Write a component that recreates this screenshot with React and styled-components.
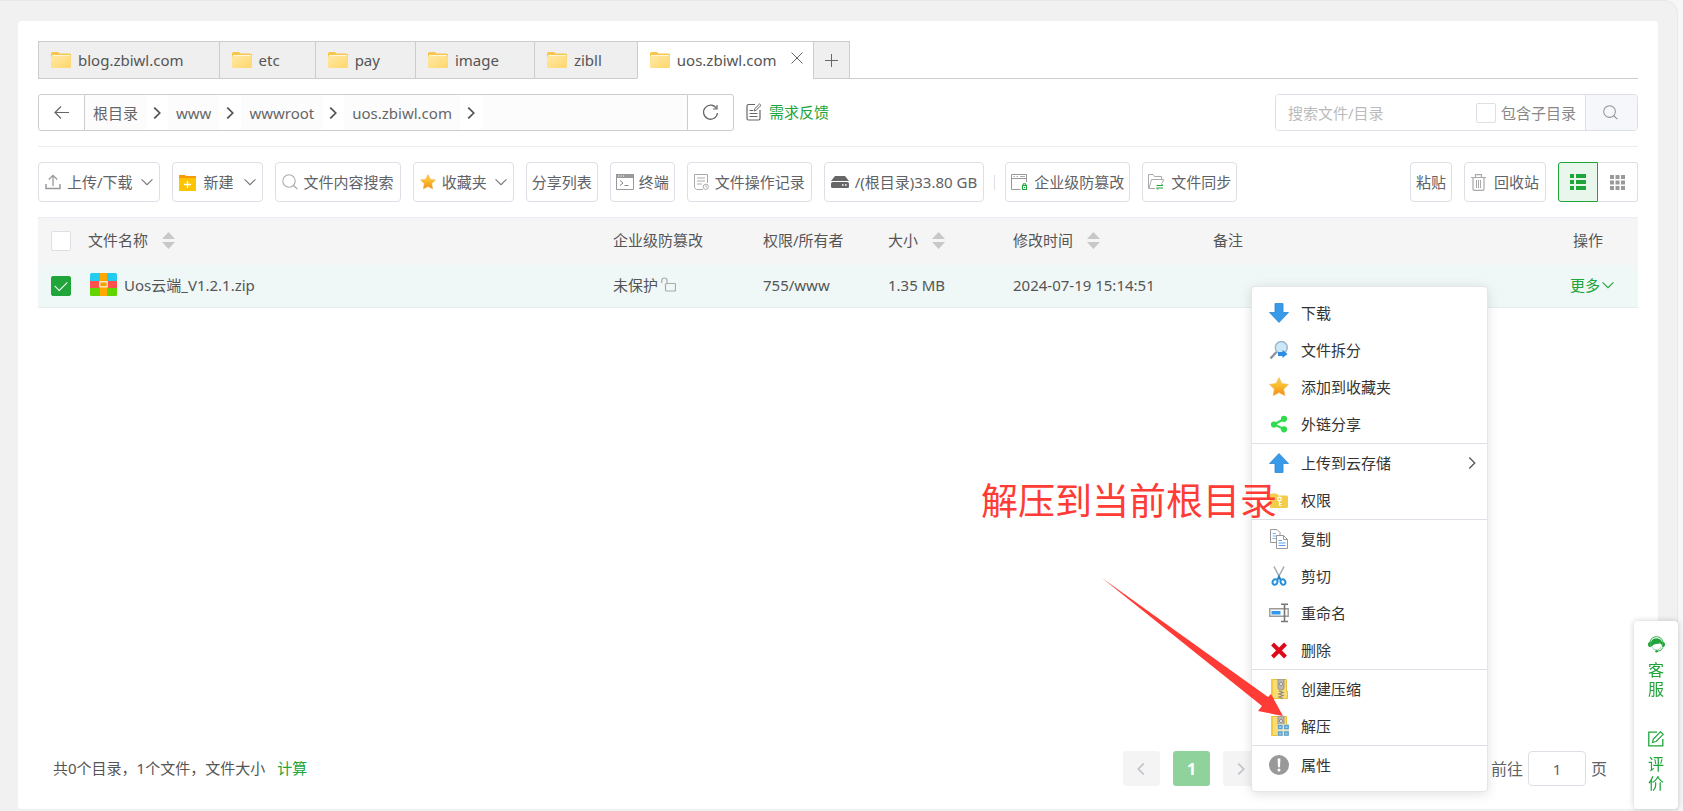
import { useState } from 'react';
import styled, { createGlobalStyle, css } from 'styled-components';

const GlobalStyle = createGlobalStyle`
    * {
        box-sizing: border-box;
    }

    body {
        margin: 0;
        background: #f7f7f7;
        color: #555;
        font-family: 'Noto Sans', 'Noto Sans CJK SC', sans-serif;
        font-size: 15px;
        line-height: 20px;
    }

    button, input {
        font: inherit;
        color: inherit;
    }

    button {
        cursor: pointer;
    }

    svg {
        display: block;
        flex: none;
    }
`

const Page = styled.div`
    display: flex;
    min-height: 100vh;
    margin-right: 5px;
    padding: 20px 19px 2px 18px;
    background: #f1f1f1;
    border: 1px solid #e8e8e8;
    border-width: 1px 1px 0 0;
    border-radius: 0 14px 0 0;
`

const Card = styled.main`
    position: relative;
    display: flex;
    flex: 1;
    flex-direction: column;
    min-width: 0;
    padding: 20px;
    background: #fff;
    border-radius: 4px;
`

const TabBar = styled.nav`
    display: flex;
    height: 38px;
    border-bottom: 1px solid #ccc;
`

const Tab = styled.div`
    display: flex;
    align-items: center;
    height: 38px;
    padding: 0 ${props => (props.$active ? '10px' : '35px')} 0 12px;
    background: ${props => (props.$active ? '#fff' : '#efefef')};
    border: 1px solid #ccc;
    border-right-width: 0;
    border-bottom-color: ${props => (props.$active ? '#fff' : '#ccc')};
`

const PlainButton = styled.button`
    display: flex;
    align-items: center;
    padding: 0;
    background: none;
    border: 0;
`

const TabName = styled(PlainButton)`
    gap: 7px;
    white-space: nowrap;
`

const TabClose = styled(PlainButton)`
    margin: 0 0 4px 14px;
`

const TabAdd = styled.button`
    display: flex;
    align-items: center;
    justify-content: center;
    width: 37px;
    height: 38px;
    padding: 0;
    background: #efefef;
    border: 1px solid #ccc;
`

const PathRow = styled.div`
    display: flex;
    align-items: center;
    margin-top: 15px;
    padding-bottom: 15px;
    border-bottom: 1px solid #eee;
`

const PathButton = styled.button`
    display: flex;
    align-items: center;
    justify-content: center;
    width: 47px;
    height: 37px;
    padding: 0;
    background: #fff;
    border: 1px solid #ccc;
    border-radius: ${props => (props.$end ? '0 3px 3px 0' : '3px 0 0 3px')};
`

const Crumbs = styled.div`
    display: flex;
    align-items: center;
    flex: 0 1 602px;
    height: 37px;
    background: #fcfcfc;
    border: 1px solid #ccc;
    border-width: 1px 0;
`

const Crumb = styled.a`
    padding: 0 8px;
    color: #666;
    text-decoration: none;
    white-space: nowrap;
`

const CrumbArrow = styled.span`
    display: flex;
    align-items: center;
    justify-content: center;
    width: 22px;
    height: 35px;
    background: #fff;
`

const Feedback = styled.a`
    display: flex;
    align-items: center;
    gap: 7px;
    margin-left: 12px;
    padding-bottom: 2px;
    color: #20a53a;
    text-decoration: none;
    white-space: nowrap;
`

const Search = styled.form`
    display: flex;
    align-items: center;
    width: 363px;
    height: 37px;
    margin-left: auto;
    border: 1px solid #dcdfe6;
    border-radius: 4px;
    overflow: hidden;
`

const SearchInput = styled.input`
    flex: 1;
    min-width: 0;
    height: 35px;
    padding: 0 12px;
    border: 0;
    outline: 0;

    &::placeholder {
        color: #bbb;
    }
`

const SubDirs = styled.label`
    display: flex;
    align-items: center;
    gap: 5px;
    margin-right: 9px;
    color: #888;
    white-space: nowrap;
`

const SearchButton = styled.button`
    display: flex;
    align-items: center;
    justify-content: center;
    width: 52px;
    height: 35px;
    padding: 0 2px 0 0;
    background: #f5f7fa;
    border: 0;
    border-left: 1px solid #dcdfe6;
`

const Checkbox = styled.input`
    appearance: none;
    display: block;
    width: 20px;
    height: 20px;
    margin: 0;
    background: #fff;
    border: 1px solid #dcdfe6;
    border-radius: 2px;

    &:checked {
        display: grid;
        place-items: center;
        background: #20a53a;
        border-color: #20a53a;
    }

    &:checked::after {
        content: '';
        width: 11px;
        height: 6px;
        margin-bottom: 3px;
        border: solid #fff;
        border-width: 0 0 1px 1px;
        transform: rotate(-45deg);
    }
`

const Toolbar = styled.div`
    display: flex;
    align-items: center;
    gap: 12px;
    margin: 15px 0;
`

const ToolButton = styled.button`
    display: flex;
    align-items: center;
    gap: ${props => props.$gap || 6}px;
    height: 40px;
    padding: 0 ${props => (props.$wide ? 6 : 5)}px;
    background: #fff;
    color: #606266;
    border: 1px solid #dcdfe6;
    border-radius: 4px;
    white-space: nowrap;
`

const Caret = styled.span`
    margin-left: 2px;
`

const Separator = styled.span`
    width: 1px;
    height: 15px;
    margin: 0 -2px;
    background: #dcdfe6;
`

const ToolbarEnd = styled.div`
    display: flex;
    gap: 12px;
    margin-left: auto;
`

const ViewSwitch = styled.div`
    display: flex;
`

const ViewButton = styled.button`
    display: flex;
    align-items: center;
    justify-content: center;
    width: 40px;
    height: 40px;
    padding: 0;
    background: #fff;
    color: #999;
    border: 1px solid #dcdfe6;
    border-left-width: 0;
    border-radius: 0 3px 3px 0;

    ${props => props.$active && css`
        background: #e9f6eb;
        color: #20a53a;
        border: 1px solid #20a53a;
        border-radius: 3px 0 0 3px;
    `}
`

const FileTable = styled.table`
    width: 100%;
    table-layout: fixed;
    border-collapse: collapse;
    text-align: left;

    th, td {
        padding: 0 10px 2px;
        font-weight: 400;
        white-space: nowrap;
    }

    th {
        height: 47px;
        background: #f5f5f5;
        border-top: 1px solid #ebeef5;
    }

    td {
        height: 43px;
        background: #eff8f7;
        border-bottom: 1px solid #e0eeec;
    }

    th:first-child, td:first-child {
        padding: 0 0 0 13px;
    }
`

const Cell = styled.div`
    display: flex;
    align-items: center;
    gap: ${props => props.$gap || 0}px;
`

const FileCell = styled(Cell)`
    padding-left: 2px;
`

const MoreButton = styled(PlainButton)`
    gap: 2px;
    margin-left: -3px;
    color: #20a53a;
`

const Footer = styled.footer`
    display: flex;
    align-items: center;
    margin-top: auto;
    padding: 0 31px 3px 15px;
`

const Summary = styled.div`
    padding-bottom: 2px;
`

const CountLink = styled.a`
    margin-left: 12px;
    color: #20a53a;
    text-decoration: none;
`

const Pager = styled.div`
    display: flex;
    align-items: center;
    gap: 13px;
    margin-left: auto;
    margin-right: 231px;
`

const PageButton = styled.button`
    display: flex;
    align-items: center;
    justify-content: center;
    width: 37px;
    height: 35px;
    padding: 0;
    background: ${props => (props.$active ? '#90d29c' : '#f4f4f5')};
    color: ${props => (props.$active ? '#fff' : '#c0c4cc')};
    border: 0;
    border-radius: 3px;
    font-size: 16px;
    font-weight: 700;
`

const Jump = styled.label`
    display: flex;
    align-items: center;
    gap: 5px;
    color: #606266;
    font-size: 16px;
`

const JumpInput = styled.input`
    width: 58px;
    height: 35px;
    padding: 0;
    border: 1px solid #dcdfe6;
    border-radius: 4px;
    font-size: 15px;
    text-align: center;
`

const Menu = styled.div`
    position: absolute;
    top: 265px;
    right: 170px;
    width: 237px;
    padding: 7px 0;
    background: #fff;
    border: 1px solid #e6e6e6;
    border-radius: 4px;
    box-shadow: 0 2px 12px rgba(0, 0, 0, .12);
`

const MenuGroup = styled.div`
    padding-top: 1px;

    & + & {
        border-top: 1px solid #dcdfe6;
    }
`

const MenuItem = styled.button`
    display: flex;
    align-items: center;
    width: 100%;
    height: 37px;
    padding: 0 9px 1px 17px;
    background: none;
    color: #333;
    border: 0;

    svg:first-child {
        margin-right: 12px;
    }

    svg:nth-of-type(2) {
        margin-left: auto;
    }
`

const Note = styled.div`
    position: absolute;
    top: 456px;
    right: 381px;
    color: #ff3b36;
    font-size: 37px;
    line-height: 48px;
    white-space: nowrap;
`

const Pointer = styled.svg`
    position: absolute;
    top: 557px;
    right: 375px;
    pointer-events: none;
`

const Helper = styled.aside`
    position: fixed;
    right: 5px;
    bottom: 2px;
    display: flex;
    flex-direction: column;
    gap: 32px;
    width: 44px;
    padding: 15px 0 16px;
    background: #fff;
    border-radius: 4px;
    box-shadow: 0 0 6px rgba(0, 0, 0, .2);
`

const HelperLink = styled.a`
    display: flex;
    flex-direction: column;
    align-items: center;
    gap: 8px;
    color: #20a53a;
    font-size: 16px;
    line-height: 19px;
    text-decoration: none;

    span {
        width: 16px;
    }
`

const Svg = ({ w = 16, h = w, box, children }) => (
    <svg width={w} height={h} viewBox={box || `0 0 ${w} ${h}`} fill="none" stroke="none" aria-hidden="true">
        {children}
    </svg>
)

const Chevron = ({ dir = 'down', w = 12, color = '#777', weight = 1 }) => {
    const paths = {
        down: 'M.5 3 5.5 8 10.5 3',
        right: 'M3 .5 8 5.5 3 10.5',
        left: 'M8 .5 3 5.5 8 10.5',
    }
    return (
        <Svg w={w} box="0 0 11 11">
            <path d={paths[dir]} stroke={color} strokeWidth={weight} />
        </Svg>
    )
}

const FolderIcon = () => (
    <Svg w={20} h={16}>
        <defs>
            <linearGradient id="folder" x1="0" y1="0" x2="1" y2="1">
                <stop offset="0" stopColor="#ffe9a6" />
                <stop offset="1" stopColor="#ffd66b" />
            </linearGradient>
        </defs>
        <path d="M0 1.5Q0 0 1.5 0H7L8.5 1.5H18.5Q20 1.5 20 3V9H0Z" fill="#f8c64f" />
        <path d="M1 3H19V7H1Z" fill="#fff6d5" />
        <path d="M0 5.5Q0 4 1.5 4H18.5Q20 4 20 5.5V14.5Q20 16 18.5 16H1.5Q0 16 0 14.5Z" fill="url(#folder)" />
    </Svg>
)

const CloseIcon = () => (
    <Svg w={12}>
        <path d="M.5.5 11.5 11.5M11.5.5.5 11.5" stroke="#666" />
    </Svg>
)

const PlusIcon = () => (
    <Svg w={13}>
        <path d="M6.5 0V13M0 6.5H13" stroke="#666" />
    </Svg>
)

const BackIcon = () => (
    <Svg w={15} h={13}>
        <path d="M15 6.5H1M7 .5 1 6.5 7 12.5" stroke="#666" strokeWidth="1.2" />
    </Svg>
)

const RefreshIcon = () => (
    <Svg w={17}>
        <path d="M14.5 4.5A7 7 0 1 0 15.5 9" stroke="#666" strokeWidth="1.3" />
        <path d="M15 1V5H11" stroke="#666" strokeWidth="1.2" />
    </Svg>
)

const FeedbackIcon = () => (
    <Svg w={16} h={18}>
        <path d="M9 1.5H2.5Q1 1.5 1 3V15.5Q1 17 2.5 17H12.5Q14 17 14 15.5V7" stroke="#666" strokeWidth="1.2" />
        <path d="M3.5 7.5H7M3.5 10.5H11.5M3.5 13.5H11.5" stroke="#666" />
        <path d="M8 8 8.7 5.8 13.5 1 15 2.4 10.2 7.2Z" stroke="#666" />
    </Svg>
)

const SearchIcon = ({ w = 16, color = '#aaa' }) => (
    <Svg w={w} box="0 0 16 16">
        <circle cx="7" cy="7" r="6.2" stroke={color} strokeWidth="1.1" />
        <path d="M11.5 11.5 15.3 15" stroke={color} strokeWidth="1.2" />
    </Svg>
)

const UploadIcon = () => (
    <Svg>
        <path d="M1 10V14.5H15V10" stroke="#999" strokeWidth="1.5" />
        <path d="M8 12V1.5M3.8 5.5 8 1.3 12.2 5.5" stroke="#999" strokeWidth="1.3" />
    </Svg>
)

const NewIcon = () => (
    <Svg w={17}>
        <path d="M0 1H6L7 2H17V4H0Z" fill="#f79a0a" />
        <path d="M0 4H17V17H0Z" fill="#ffc400" />
        <path d="M8.5 7V14M5 10.5H12" stroke="#fff" strokeWidth="1.3" />
    </Svg>
)

const StarIcon = ({ w = 16 }) => (
    <Svg w={w} box="0 0 20 20">
        <defs>
            <linearGradient id="star" x1="0" y1="0" x2="0" y2="1">
                <stop offset="0" stopColor="#f8c75a" />
                <stop offset=".4" stopColor="#fbc02d" />
                <stop offset="1" stopColor="#f08a17" />
            </linearGradient>
        </defs>
        <path d="M10 .6 12.9 6.5 19.5 7.4 14.7 12 15.9 18.8 10 15.6 4.1 18.8 5.3 12 .5 7.4 7.1 6.5Z" fill="url(#star)" stroke="#f3b55b" strokeWidth=".6" />
    </Svg>
)

const TerminalIcon = () => (
    <Svg w={18} h={16}>
        <path d="M.5.5H17.5V15.5H.5Z" stroke="#999" />
        <path d="M0 0H18V4H0Z" fill="#999" />
        <path d="M2 2H3.2M4.5 2H5.7M7 2H8.2" stroke="#fff" />
        <path d="M4 6.5 7 9 4 11.5M8.5 11.5H12.5" stroke="#888" />
    </Svg>
)

const RecordIcon = () => (
    <Svg w={15} h={16}>
        <path d="M9 15.5H2.5L.5 13.5V.5H13.5V9" stroke="#aaa" />
        <path d="M3 4H11M3 7H11M3 10H8" stroke="#aaa" />
        <circle cx="11.8" cy="12.8" r="2.6" stroke="#aaa" />
        <path d="M11.8 11.3V13H13" stroke="#aaa" strokeWidth=".8" />
    </Svg>
)

const DiskIcon = () => (
    <Svg w={18} h={12}>
        <path d="M4 0H14L18 5H0Z" fill="#666" />
        <rect y="6" width="18" height="6" rx="1.5" fill="#666" />
        <path d="M11 9H12.6M14 9H15.6" stroke="#fff" strokeWidth="1.6" />
    </Svg>
)

const GuardIcon = () => (
    <Svg w={17} h={17}>
        <path d="M9.5 15.5H.5V.5H15.5V8" stroke="#999" />
        <path d="M.5 4.5H15.5" stroke="#999" />
        <path d="M2.5 2.5H4M5.5 2.5H7M9 2.5H14" stroke="#aaa" />
        <rect x="11.5" y="11.5" width="4" height="4" stroke="#20a53a" />
        <path d="M12.2 11.5V9.8H14.8V11.5M13.5 13V14.2" stroke="#20a53a" />
    </Svg>
)

const SyncIcon = () => (
    <Svg w={17} h={16}>
        <path d="M7 14.5H.5V.5H5L6.5 2.5H13.5V5.5" stroke="#aaa" />
        <path d="M1 14 3.5 5.5H15.5L14.5 9" stroke="#aaa" />
        <path d="M8.5 11.5H15L13.2 9.8M15 14H8.5L10.2 15.7" stroke="#20a53a" />
    </Svg>
)

const TrashIcon = () => (
    <Svg w={15} h={17}>
        <path d="M0 3.5H15M4.5 3V.7H10.5V3" stroke="#aaa" strokeWidth="1.2" />
        <path d="M2 4V15Q2 16.4 3.4 16.4H11.6Q13 16.4 13 15V4" stroke="#aaa" strokeWidth="1.2" />
        <path d="M5.5 6V14M7.5 6V14M9.5 6V14" stroke="#aaa" />
    </Svg>
)

const ListIcon = () => (
    <Svg w={16}>
        <path d="M0 0H4V4H0ZM6 0H16V4H6ZM0 6H4V10H0ZM6 6H16V10H6ZM0 12H4V16H0ZM6 12H16V16H6Z" fill="currentColor" />
    </Svg>
)

const GridIcon = () => (
    <Svg w={15}>
        <path d="M0 0H4V4H0ZM5.5 0H9.5V4H5.5ZM11 0H15V4H11ZM0 5.5H4V9.5H0ZM5.5 5.5H9.5V9.5H5.5ZM11 5.5H15V9.5H11ZM0 11H4V15H0ZM5.5 11H9.5V15H5.5ZM11 11H15V15H11Z" fill="currentColor" />
    </Svg>
)

const SortIcon = () => (
    <Svg w={13} h={17}>
        <path d="M6.5 0 13 7H0ZM0 10H13L6.5 17Z" fill="#c8c8c8" />
    </Svg>
)

const ZipIcon = () => (
    <Svg w={27} h={23}>
        <path d="M0 8V1.5Q0 0 1.5 0H25.5Q27 0 27 1.5V8Z" fill="#22cbf0" />
        <path d="M0 8H27V15H0Z" fill="#ff4f4f" />
        <path d="M0 15H27V21.5Q27 23 25.5 23H1.5Q0 23 0 21.5Z" fill="#62d400" />
        <path d="M10 0H17V23H10Z" fill="#ffa800" />
        <rect x="9.8" y="8.8" width="7.4" height="5" fill="#f5a000" stroke="#ffe9c0" strokeWidth="1.4" />
    </Svg>
)

const UnlockIcon = () => (
    <Svg w={15} h={15}>
        <rect x="4.5" y="6.5" width="10" height="7.5" rx="1" stroke="#aaa" strokeWidth="1.2" />
        <path d="M.8 6V3.5Q.8 1 3.4 1 6 1 6 3.5V6" stroke="#aaa" strokeWidth="1.2" />
    </Svg>
)

const ArrowIcon = ({ up }) => (
    <Svg w={20}>
        <path
            d={up ? 'M10 .5 19.5 10.5H14V19.5H6V10.5H.5Z' : 'M10 19.5 19.5 9.5H14V.5H6V9.5H.5Z'}
            fill="#3a9aea"
            stroke="#2f86d4"
            strokeWidth=".8"
        />
    </Svg>
)

const SplitIcon = () => (
    <Svg w={20}>
        <path d="M1.5 18.5 7.5 12" stroke="#8a949c" strokeWidth="2.4" />
        <circle cx="12.3" cy="7.5" r="6" fill="#cde7fa" stroke="#9fb4c4" strokeWidth="1.4" />
        <path d="M9 12H13.5V9.8L18.5 14 13.5 18V16H9Z" fill="#2b8ee0" />
    </Svg>
)

const ShareIcon = () => (
    <Svg w={20}>
        <path d="M15 5 5 10.5 15 15" stroke="#2fdc4a" strokeWidth="2" />
        <circle cx="15" cy="4.8" r="3.1" fill="#2fdc4a" />
        <circle cx="5" cy="10.5" r="3.1" fill="#2fdc4a" />
        <circle cx="15" cy="15.3" r="3.1" fill="#2fdc4a" />
    </Svg>
)

const KeyFolderIcon = () => (
    <Svg w={20}>
        <path d="M1 5Q1 3.5 2.5 3.5H7.5L9.5 5.5H17.5Q19 5.5 19 7V16.5Q19 18 17.5 18H2.5Q1 18 1 16.5Z" fill="#f2cd4b" />
        <circle cx="10.5" cy="9" r="1.8" stroke="#fff" strokeWidth="1.2" />
        <path d="M10.5 11V16M10.5 13.5H12.5M10.5 15.5H12.5" stroke="#fff" strokeWidth="1.1" />
    </Svg>
)

const CopyIcon = () => (
    <Svg w={20}>
        <path d="M1.5.5H8L11 3.5V13.5H1.5Z" fill="#fff" stroke="#999" />
        <path d="M3.5 4.5H7M3.5 7H8M3.5 9.5H8" stroke="#7db5f5" />
        <path d="M7.5 6.5H14.5L18.5 10.5V19.5H7.5Z" fill="#fff" stroke="#999" />
        <path d="M14.5 6.5V10.5H18.5" stroke="#999" />
        <path d="M9.5 11.5H13M9.5 14H16.5M9.5 16.5H16.5" stroke="#5b9ff2" />
    </Svg>
)

const CutIcon = () => (
    <Svg w={20}>
        <path d="M5 .5 11.5 13M15 .5 8.5 13" stroke="#a4adb3" strokeWidth="1.6" />
        <path d="M8.5 14 10 10.5 11.5 14" stroke="#2a7fc0" strokeWidth="1.8" />
        <ellipse cx="6" cy="16" rx="2.3" ry="2.8" stroke="#2391dc" strokeWidth="2" transform="rotate(25 6 16)" />
        <ellipse cx="14" cy="16" rx="2.3" ry="2.8" stroke="#2391dc" strokeWidth="2" transform="rotate(-25 14 16)" />
    </Svg>
)

const RenameIcon = () => (
    <Svg w={20}>
        <path d="M.8 5.8H19.2V13.2H.8Z" fill="#fff" stroke="#9a9a9a" strokeWidth="1.4" />
        <path d="M2.5 8H11.5V11.5H2.5Z" fill="#2f97ee" />
        <path d="M12 1.2H19M12 18.5H19M15.5 1.2V18.5" stroke="#777" strokeWidth="1.6" />
    </Svg>
)

const DeleteIcon = () => (
    <Svg w={20}>
        <path d="M3.5 4 16.5 17M16.5 4 3.5 17" stroke="#df0a18" strokeWidth="4" />
    </Svg>
)

const ArchiveIcon = ({ extract }) => (
    <Svg w={20}>
        <path d="M2.5.5H17.5V12H18.5V19.5H2.5Z" fill="#fbdc72" stroke="#eabf3c" />
        <path d="M2 0H4V20H2Z" fill="#f4c942" />
        <path d="M9 0H15V9Q15 11 12 11 9 11 9 9Z" fill="#b9b7b0" stroke="#8d8b85" strokeWidth=".8" />
        <circle cx="12" cy="5" r="1.5" fill="#fff" stroke="#777" strokeWidth=".8" />
        <path d="M10 12 14 13.5 10 15 14 16.5 10 18 14 19.5" stroke="#888" strokeWidth="1.2" />
        {extract && (
            <>
                <path d="M8.5 8H20V20H8.5Z" fill="#f0e6bd" />
                <path d="M9.5 9.5H13V12.7H9.5ZM15.7 9.5H19.2V12.7H15.7ZM9.5 16H13V19.2H9.5ZM15.7 16H19.2V19.2H15.7Z" fill="#9bd0f4" stroke="#5a9fce" strokeWidth="1.3" />
            </>
        )}
    </Svg>
)

const InfoIcon = () => (
    <Svg w={20}>
        <circle cx="10" cy="10" r="10" fill="#999" />
        <path d="M8.6 3.5H11.4L11 12.3H9Z" fill="#fff" />
        <circle cx="10" cy="15" r="1.5" fill="#fff" />
    </Svg>
)

const ServiceIcon = () => (
    <Svg w={17} h={17}>
        <path d="M2 6.5Q3 .7 8.5.7 14 .7 15 6.5" stroke="#20a53a" strokeWidth=".9" />
        <path d="M2.8 10Q2 2.3 8.5 2.3 15 2.3 14.2 10 13.5 7.8 11.8 7.2 11 8 8 8 5 8 3.8 10.5Z" fill="#20a53a" />
        <path d="M2.8 5.7Q0 5.7 0 8.5 0 11.3 2.8 11.3ZM14.2 5.7Q17 5.7 17 8.5 17 11.3 14.2 11.3Z" fill="#20a53a" />
        <path d="M3.6 10.5Q5 14 8.5 14 12 14 13.4 10.5" stroke="#8bd09a" strokeWidth=".8" />
        <path d="M15 11.5Q13.5 15 9.5 15.3" stroke="#20a53a" strokeWidth=".9" />
        <circle cx="8.6" cy="15.3" r="1.3" fill="#20a53a" />
    </Svg>
)

const ReviewIcon = () => (
    <Svg w={16}>
        <path d="M9 1.2H.8V14.8H14.8V8" stroke="#20a53a" strokeWidth="1.3" />
        <path d="M4.5 11.5 5.3 8 12.5.8 15.2 3.3 8 10.5Z" stroke="#20a53a" strokeWidth="1.2" />
    </Svg>
)

const tabs = ['blog.zbiwl.com', 'etc', 'pay', 'image', 'zibll', 'uos.zbiwl.com']
const crumbs = ['根目录', 'www', 'wwwroot', 'uos.zbiwl.com']

const menuGroups = [
    [
        { label: '下载', icon: <ArrowIcon /> },
        { label: '文件拆分', icon: <SplitIcon /> },
        { label: '添加到收藏夹', icon: <StarIcon w={20} /> },
        { label: '外链分享', icon: <ShareIcon /> },
    ],
    [
        { label: '上传到云存储', icon: <ArrowIcon up />, nested: true },
        { label: '权限', icon: <KeyFolderIcon /> },
    ],
    [
        { label: '复制', icon: <CopyIcon /> },
        { label: '剪切', icon: <CutIcon /> },
        { label: '重命名', icon: <RenameIcon /> },
        { label: '删除', icon: <DeleteIcon /> },
    ],
    [
        { label: '创建压缩', icon: <ArchiveIcon /> },
        { label: '解压', icon: <ArchiveIcon extract /> },
    ],
    [{ label: '属性', icon: <InfoIcon /> }],
]

function ContextMenu() {
    return (
        <Menu role="menu">
            {menuGroups.map((group, index) => (
                <MenuGroup key={index}>
                    {group.map(item => (
                        <MenuItem key={item.label} role="menuitem">
                            {item.icon}
                            {item.label}
                            {item.nested && <Chevron dir="right" color="#555" weight={1.2} />}
                        </MenuItem>
                    ))}
                </MenuGroup>
            ))}
        </Menu>
    )
}

function App() {
    const [active, setActive] = useState('uos.zbiwl.com')
    const [checked, setChecked] = useState(true)

    return (
        <>
            <GlobalStyle />
            <Page>
                <Card>
                    <TabBar>
                        {tabs.map(tab => (
                            <Tab key={tab} $active={tab === active}>
                                <TabName onClick={() => setActive(tab)}>
                                    <FolderIcon />
                                    {tab}
                                </TabName>
                                {tab === active && <TabClose aria-label="关闭"><CloseIcon /></TabClose>}
                            </Tab>
                        ))}
                        <TabAdd aria-label="新标签"><PlusIcon /></TabAdd>
                    </TabBar>

                    <PathRow>
                        <PathButton aria-label="返回"><BackIcon /></PathButton>
                        <Crumbs>
                            {crumbs.map(name => (
                                <Cell key={name}>
                                    <Crumb href="#">{name}</Crumb>
                                    <CrumbArrow><Chevron dir="right" color="#555" weight={1.6} /></CrumbArrow>
                                </Cell>
                            ))}
                        </Crumbs>
                        <PathButton $end aria-label="刷新"><RefreshIcon /></PathButton>
                        <Feedback href="#"><FeedbackIcon />需求反馈</Feedback>
                        <Search onSubmit={event => event.preventDefault()}>
                            <SearchInput placeholder="搜索文件/目录" aria-label="搜索文件/目录" />
                            <SubDirs><Checkbox type="checkbox" />包含子目录</SubDirs>
                            <SearchButton aria-label="搜索"><SearchIcon w={15} color="#909399" /></SearchButton>
                        </Search>
                    </PathRow>

                    <Toolbar>
                        <ToolButton $wide><UploadIcon />上传/下载<Caret><Chevron /></Caret></ToolButton>
                        <ToolButton $wide $gap={8}><NewIcon />新建<Caret><Chevron /></Caret></ToolButton>
                        <ToolButton $wide><SearchIcon />文件内容搜索</ToolButton>
                        <ToolButton $wide><StarIcon />收藏夹<Caret><Chevron /></Caret></ToolButton>
                        <ToolButton>分享列表</ToolButton>
                        <ToolButton $gap={5}><TerminalIcon />终端</ToolButton>
                        <ToolButton $wide><RecordIcon />文件操作记录</ToolButton>
                        <ToolButton $wide $gap={6}><DiskIcon />/(根目录)33.80 GB</ToolButton>
                        <Separator />
                        <ToolButton><GuardIcon />企业级防篡改</ToolButton>
                        <ToolButton><SyncIcon />文件同步</ToolButton>
                        <ToolbarEnd>
                            <ToolButton>粘贴</ToolButton>
                            <ToolButton $gap={8} $wide><TrashIcon />回收站</ToolButton>
                            <ViewSwitch>
                                <ViewButton $active aria-label="列表"><ListIcon /></ViewButton>
                                <ViewButton aria-label="网格"><GridIcon /></ViewButton>
                            </ViewSwitch>
                        </ToolbarEnd>
                    </Toolbar>

                    <FileTable>
                        <colgroup>
                            <col width="40" />
                            <col width="525" />
                            <col width="150" />
                            <col width="125" />
                            <col width="125" />
                            <col width="200" />
                            <col />
                            <col width="75" />
                        </colgroup>
                        <thead>
                            <tr>
                                <th><Checkbox type="checkbox" aria-label="全选" /></th>
                                <th><Cell $gap={14}>文件名称<SortIcon /></Cell></th>
                                <th>企业级防篡改</th>
                                <th>权限/所有者</th>
                                <th><Cell $gap={14}>大小<SortIcon /></Cell></th>
                                <th><Cell $gap={14}>修改时间<SortIcon /></Cell></th>
                                <th>备注</th>
                                <th>操作</th>
                            </tr>
                        </thead>
                        <tbody>
                            <tr>
                                <td>
                                    <Checkbox
                                        type="checkbox"
                                        aria-label="Uos云端_V1.2.1.zip"
                                        checked={checked}
                                        onChange={() => setChecked(!checked)}
                                    />
                                </td>
                                <td><FileCell $gap={7}><ZipIcon />Uos云端_V1.2.1.zip</FileCell></td>
                                <td><Cell $gap={3}>未保护<UnlockIcon /></Cell></td>
                                <td>755/www</td>
                                <td>1.35 MB</td>
                                <td>2024-07-19 15:14:51</td>
                                <td />
                                <td><MoreButton>更多<Chevron color="#20a53a" /></MoreButton></td>
                            </tr>
                        </tbody>
                    </FileTable>

                    <Footer>
                        <Summary>
                            共0个目录，1个文件，文件大小
                            <CountLink href="#">计算</CountLink>
                        </Summary>
                        <Pager>
                            <PageButton aria-label="上一页"><Chevron dir="left" color="#c0c4cc" weight={1.6} /></PageButton>
                            <PageButton $active>1</PageButton>
                            <PageButton aria-label="下一页"><Chevron dir="right" color="#c0c4cc" weight={1.6} /></PageButton>
                        </Pager>
                        <Jump>前往<JumpInput defaultValue="1" />页</Jump>
                    </Footer>

                    <ContextMenu />
                    <Note>解压到当前根目录</Note>
                    <Pointer width="181" height="138" viewBox="0 0 181 138" aria-hidden="true">
                        <path d="M0 0 166 119 169 116 181 138 156 133 160 128Z" fill="#ff3b36" />
                    </Pointer>
                </Card>
            </Page>

            <Helper>
                <HelperLink href="#"><ServiceIcon /><span>客服</span></HelperLink>
                <HelperLink href="#"><ReviewIcon /><span>评价</span></HelperLink>
            </Helper>
        </>
    )
}

export default App;
